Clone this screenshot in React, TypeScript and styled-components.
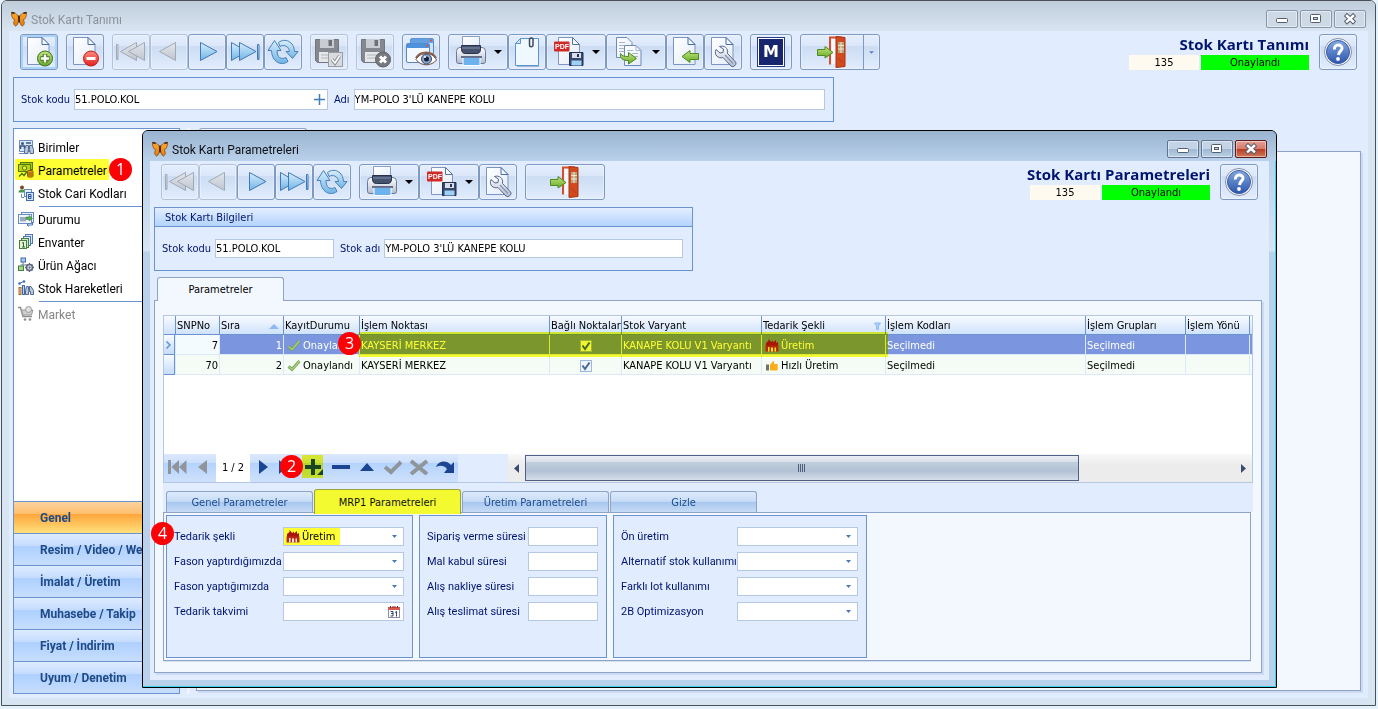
import React from "react";
import styled, { createGlobalStyle, css } from "styled-components";

const ui = `"DejaVu Sans Condensed", "Noto Sans", sans-serif`;
const shell = `"Open Sans", "Noto Sans", sans-serif`;
const menu = `Roboto, "Noto Sans", sans-serif`;
const line = "#6a93cf";
const tabLine = "#8fa3c9";
const fieldLine = "#b4c8e4";
const face = "#e1edff";
const page = "#f3f8ff";
const navy = "#00146e";
const mark = "#ffff33";

const GlobalStyle = createGlobalStyle`
  * { box-sizing: border-box; }
  body { margin: 0; background: #e6f2fb; font: 11px/14px ${ui}; color: #000; }
  button, input, select { font: inherit; color: inherit; margin: 0; }
`;

/* ---------- window frame ---------- */

const Desktop = styled.div`
  display: flex;
  flex-direction: column;
  min-height: 100vh;
  min-width: 1280px;
  padding: 0 2px 3px 1px;
`;

const MainWindow = styled.div`
  position: relative;
  flex: 1;
  display: flex;
  flex-direction: column;
  padding: 0 7px 7px;
  background: #d7e5f2;
  border: 1px solid #4b4f57;
  border-radius: 6px 6px 0 0;
`;

const DialogWindow = styled.section`
  position: absolute;
  z-index: 5;
  top: 129px;
  left: 140px;
  right: 98px;
  padding: 0 7px 7px;
  background: linear-gradient(#9ab3cf 0, #b9d1ea 30px, #d6e4f3 120px, #b9d1ea 121px);
  border: 1px solid #000;
  border-radius: 6px 6px 0 0;
  box-shadow: inset -1px -1px 0 #35d3ea;
`;

const TitleBar = styled.header<{ $active?: boolean }>`
  display: flex;
  align-items: center;
  gap: 4px;
  height: 30px;
  margin: 0 -7px;
  padding: 6px 9px 0 9px;
  border-radius: 5px 5px 0 0;
  font: 12px/16px ${menu};
  color: ${(p) => (p.$active ? "#0c1016" : "#8b939c")};
  background: ${(p) =>
    p.$active ? "linear-gradient(#9ab3cf, #b9d1ea)" : "linear-gradient(#bfccda, #d9e5f1)"};
`;

const TitleText = styled.span`
  flex: 1;
  padding-top: 1px;
`;

const Captions = styled.div`
  display: flex;
  gap: 2px;
`;

const CaptionButton = styled.button<{ $tone: "idle" | "active" | "close" }>`
  display: flex;
  align-items: center;
  justify-content: center;
  width: 32px;
  height: 18px;
  padding: 0;
  border-radius: 2px;
  box-shadow: inset 0 0 0 1px rgba(255, 255, 255, 0.45);
  ${(p) =>
    p.$tone === "idle" &&
    css`
      border: 1px solid #8996aa;
      background: #ced9e6;
    `}
  ${(p) =>
    p.$tone === "active" &&
    css`
      border: 1px solid #62738f;
      background: linear-gradient(#c3d4e7 50%, #9fb8d3 51%, #b9cfe6);
    `}
  ${(p) =>
    p.$tone === "close" &&
    css`
      border: 1px solid #5b1a1a;
      background: linear-gradient(#e2a196 0, #d6796a 49%, #b93a22 51%, #cf7a5c);
    `}
`;

const Client = styled.div`
  flex: 1;
  display: flex;
  flex-direction: column;
  padding: 3px 0 0;
  background: ${face};
`;

/* ---------- toolbar ---------- */

const Toolbar = styled.div`
  display: flex;
  align-items: flex-start;
  gap: 8px;
  padding: 0 11px;
`;

const ButtonGroup = styled.div`
  display: flex;
`;

const ToolButton = styled.button<{ $width?: number; $hot?: boolean }>`
  display: flex;
  align-items: center;
  justify-content: center;
  gap: 8px;
  flex: none;
  width: ${(p) => p.$width ?? 38}px;
  height: 36px;
  padding: 0;
  border: 1px solid #7d99c4;
  border-radius: 3px;
  background: linear-gradient(#e4eefd 0, #dbe7f9 32%, #ccdcf2 34%, #e2edfe);
  box-shadow: ${(p) => (p.$hot ? "inset 0 0 0 2px #a9d3f8" : "inset 0 0 0 1px rgba(255,255,255,.35)")};
  &:disabled {
    border-color: #b3c2da;
  }
`;

const Status = styled.div`
  margin-left: auto;
  display: flex;
  flex-direction: column;
  align-items: flex-end;
  gap: 1px;
`;

const StatusTitle = styled.h1`
  margin: 0;
  font: bold 15px/20px ${shell};
  color: ${navy};
  white-space: nowrap;
`;

const StatusRow = styled.div`
  display: flex;
  gap: 2px;
`;

const StatusCell = styled.span<{ $ok?: boolean }>`
  width: ${(p) => (p.$ok ? 108 : 70)}px;
  height: 15px;
  line-height: 16px;
  text-align: center;
  background: ${(p) => (p.$ok ? "#00ff00" : "#fffaf0")};
`;

const HelpSlot = styled.div`
  margin-left: 2px;
`;

/* ---------- fields ---------- */

const FieldBar = styled.div`
  display: flex;
  align-items: center;
  width: 821px;
  height: 45px;
  margin: 7px 0 0 4px;
  padding: 0 8px 0 7px;
  border: 1px solid ${line};
`;

const Label = styled.label`
  color: ${navy};
  white-space: nowrap;
`;

const TextField = styled.input`
  flex: 1;
  min-width: 0;
  height: 21px;
  padding: 0;
  border: 1px solid ${fieldLine};
  background: #fff;
  outline: none;
`;

const FieldBox = styled.div<{ $width?: number }>`
  position: relative;
  display: flex;
  flex: ${(p) => (p.$width ? "none" : "1")};
  width: ${(p) => (p.$width ? p.$width + "px" : "auto")};
`;

const InnerButton = styled.button<{ $size: number }>`
  position: absolute;
  right: 1px;
  top: 1px;
  bottom: 1px;
  display: flex;
  align-items: center;
  justify-content: center;
  width: ${(p) => p.$size}px;
  padding: 0;
  border: 0;
  background: #fff;
`;

const SideLabel = styled(Label)`
  margin: 0 4px 0 6px;
`;

const FirstLabel = styled(Label)`
  width: 53px;
`;

/* ---------- workspace ---------- */

const Workspace = styled.div`
  flex: 1;
  display: flex;
  margin: 6px 7px 4px 4px;
`;

const Sidebar = styled.nav`
  display: flex;
  flex-direction: column;
  width: 167px;
  background: #fff;
  border: 1px solid ${line};
`;

const SideList = styled.div`
  flex: 1;
  padding: 7px 0 0 1px;
`;

const SideRow = styled.div`
  position: relative;
  height: 23px;
`;

const SideItem = styled.button<{ $marked?: boolean }>`
  display: flex;
  align-items: center;
  gap: 4px;
  height: 21px;
  padding: 0 2px 0 3px;
  border: 0;
  background: ${(p) => (p.$marked ? mark : "none")};
  font: 12px/16px ${menu};
  white-space: nowrap;
  &:disabled {
    color: #868686;
  }
  span {
    padding-top: 2px;
  }
  svg {
    mix-blend-mode: multiply;
  }
`;

const SideRule = styled.hr`
  height: 1px;
  margin: 1px 0 1px 24px;
  border: 0;
  background: ${line};
`;

const SideGroup = styled.button<{ $open?: boolean }>`
  display: block;
  width: 100%;
  height: 32px;
  padding: 0 0 0 26px;
  border: 0;
  border-top: 1px solid ${line};
  font: bold 12px/16px ${menu};
  text-align: left;
  white-space: nowrap;
  overflow: hidden;
  color: #1f4a86;
  background: ${(p) =>
    p.$open
      ? "linear-gradient(#fbd3a0 0, #fdbe6c 38%, #fea63c 40%, #ffe07c)"
      : "linear-gradient(#deebff 0, #c6dcfd 38%, #aed0ff 40%, #c7ddfd)"};
`;

const Splitter = styled.div`
  width: 16px;
  display: flex;
  justify-content: center;
  &::before {
    content: "";
    width: 3px;
    background: #f0f6ff;
  }
`;

const Pages = styled.div`
  flex: 1;
  display: flex;
  flex-direction: column;
  padding-bottom: 3px;
`;

const PageTab = styled.div<{ $width: number }>`
  position: relative;
  z-index: 1;
  display: flex;
  align-items: center;
  justify-content: center;
  width: ${(p) => p.$width}px;
  height: 24px;
  margin: 0 0 -1px 3px;
  padding-top: 1px;
  border: 1px solid ${tabLine};
  border-bottom: 0;
  border-radius: 3px 3px 0 0;
  background: ${page};
`;

const PageBody = styled.div`
  flex: 1;
  border: 1px solid ${tabLine};
  background: ${page};
  box-shadow: 2px 2px 0 #cddbf2;
`;

/* ---------- dialog ---------- */

const DialogClient = styled(Client)`
  padding: 3px 7px 7px 4px;
`;

const DialogToolbar = styled(Toolbar)`
  padding: 0 4px 0 7px;
`;

const InfoPanel = styled.div`
  width: 539px;
  margin-top: 7px;
  border: 1px solid ${line};
`;

const InfoHeader = styled.div`
  height: 19px;
  padding: 0 10px;
  line-height: 20px;
  color: ${navy};
  border-bottom: 1px solid ${line};
  background: linear-gradient(#e3eeff, #b4d3fd);
`;

const InfoRow = styled.div`
  display: flex;
  align-items: center;
  height: 43px;
  padding: 0 9px 0 7px;
  input {
    height: 19px;
  }
`;

const DialogTab = styled(PageTab)`
  margin-top: 6px;
`;

const DialogPage = styled(PageBody)`
  flex: none;
  padding: 14px 8px 11px;
`;

const GridFrame = styled.div`
  position: relative;
  border: 1px solid ${fieldLine};
  background: #fff;
`;

const GridScroll = styled.div`
  min-height: 138px;
  overflow: hidden;
`;

const Table = styled.table`
  width: 100%;
  table-layout: fixed;
  border-collapse: separate;
  border-spacing: 0;
`;

const Th = styled.th`
  height: 19px;
  padding: 2px 1px 0;
  overflow: hidden;
  font-weight: normal;
  text-align: left;
  white-space: nowrap;
  border-left: 1px solid ${line};
  border-bottom: 1px solid ${line};
  background: linear-gradient(#f8fbff, #cfe2fc);
  &:first-child {
    border-left: 0;
  }
`;

const HeadFlex = styled.span`
  display: flex;
  align-items: center;
  justify-content: space-between;
  padding-right: 3px;
`;

const Td = styled.td<{ $kind?: "handle" | "plain" | "focus"; $align?: string }>`
  height: 20px;
  padding: 2px 1px 0;
  overflow: hidden;
  white-space: nowrap;
  text-align: ${(p) => p.$align ?? "left"};
  border-left: 1px solid #dce9fb;
  border-bottom: 1px solid #dce9fb;
  background: ${(p) => (p.$kind === "focus" ? "#7b96de" : p.$kind === "plain" ? "#f3fbff" : "#f4fcf5")};
  color: ${(p) => (p.$kind === "focus" ? "#fff" : "#000")};
  ${(p) =>
    p.$kind === "handle" &&
    css`
      border-left: 0;
      border-right: 1px solid ${line};
      border-bottom: 1px solid ${line};
      background: linear-gradient(#f8fbff, #c5dcfb);
      padding: 0 0 0 1px;
    `}
  svg, input {
    display: block;
  }
`;

const CellFlex = styled.span<{ $gap: number }>`
  display: flex;
  align-items: center;
  gap: ${(p) => p.$gap}px;
  padding-left: 2px;
`;

const Tick = styled.input`
  appearance: none;
  width: 12px;
  height: 12px;
  margin: 0 auto;
  border: 1px solid #9db8dc;
  background: #eef4fc
    url("data:image/svg+xml,%3Csvg xmlns='http://www.w3.org/2000/svg' viewBox='0 0 10 10'%3E%3Cpath d='M1.5 4.5 4 8 8.5 1.5' fill='none' stroke='%234a6797' stroke-width='2'/%3E%3C/svg%3E")
    center / 10px 10px no-repeat;
`;

const RowMark = styled.div`
  position: absolute;
  left: 195px;
  top: 16px;
  width: 529px;
  height: 25px;
  background: ${mark};
  mix-blend-mode: multiply;
  pointer-events: none;
`;

const Badge = styled.span<{ $x: number; $y: number }>`
  position: absolute;
  left: ${(p) => p.$x}px;
  top: ${(p) => p.$y}px;
  z-index: 2;
  width: 23px;
  height: 23px;
  border-radius: 50%;
  background: #fb0207;
  color: #fff;
  font: 16px/23px ${shell};
  text-align: center;
`;

const GridFooter = styled.div`
  display: flex;
  height: 28px;
`;

const Navigator = styled.div`
  display: flex;
  width: 344px;
  background: ${face};
`;

const NavButton = styled.button<{ $marked?: boolean }>`
  display: flex;
  align-items: center;
  justify-content: center;
  width: 26px;
  height: 28px;
  padding: 0 0 2px;
  border: 0;
  background: linear-gradient(#dbe8fc 0, #cde0fb 30%, #b3d3fe 33%, #cbdffb 90%);
  position: relative;
  ${(p) =>
    p.$marked &&
    css`
      &::after {
        content: "";
        position: absolute;
        left: 0;
        top: 1px;
        width: 21px;
        height: 23px;
        background: ${mark};
        mix-blend-mode: multiply;
      }
    `}
`;

const PagerText = styled.span`
  width: 34px;
  line-height: 28px;
  text-align: center;
  background: #fff;
`;

const ScrollBar = styled.div`
  flex: 1;
  display: flex;
  align-items: center;
  background: linear-gradient(#f8f8f8, #ececec 40%);
`;

const ScrollArrow = styled.button`
  display: flex;
  align-items: center;
  justify-content: center;
  width: 17px;
  height: 100%;
  padding: 0;
  border: 0;
  background: none;
`;

const ScrollTrack = styled.div`
  flex: 1;
  display: flex;
  height: 26px;
`;

const ScrollThumb = styled.div`
  display: flex;
  align-items: center;
  justify-content: center;
  width: 78%;
  border: 1px solid #4f5f86;
  background: linear-gradient(#eceff4 0, #d9dfe8 24%, #c1cedd 26%, #b2c1d4 62%, #d5dee9);
`;

const TabStrip = styled.div`
  display: flex;
  align-items: flex-end;
  gap: 1px;
  height: 29px;
  padding-left: 3px;
  background: ${face};
`;

const Tab = styled.button<{ $active?: boolean }>`
  position: relative;
  width: 147px;
  height: ${(p) => (p.$active ? 25 : 21)}px;
  margin-bottom: ${(p) => (p.$active ? -2 : 0)}px;
  z-index: ${(p) => (p.$active ? 1 : 0)};
  padding: 2px 0 0;
  border: 1px solid ${(p) => (p.$active ? "#98a43a" : tabLine)};
  border-bottom: 0;
  border-radius: 3px 3px 0 0;
  color: ${(p) => (p.$active ? "#101010" : "#1d4b8f")};
  background: ${(p) =>
    p.$active ? "#f4fa30" : "linear-gradient(#dceafc 0, #c7dcf6 47%, #a6c6ee 50%, #c6dbf6)"};
`;

const TabPage = styled.div`
  position: relative;
  display: flex;
  gap: 6px;
  margin-right: 2px;
  padding: 2px;
  border: 1px solid ${tabLine};
  background: ${page};
  box-shadow: 0 1px 0 #d5e1f4;
`;

const FieldGroup = styled.fieldset<{ $width: number }>`
  display: flex;
  flex-direction: column;
  gap: 6px;
  width: ${(p) => p.$width}px;
  min-width: 0;
  margin: 0;
  padding: 11px 8px 36px 7px;
  border: 1px solid ${line};
  background: ${face};
`;

const FieldLine = styled.div`
  display: flex;
  align-items: center;
  justify-content: space-between;
  input, select {
    height: 19px;
  }
  label {
    font: 11px/14px ${menu};
  }
`;

const Select = styled.select<{ $marked?: boolean }>`
  appearance: none;
  width: 100%;
  padding: 0 16px 0 ${(p) => (p.$marked ? 18 : 1)}px;
  border: 1px solid ${fieldLine};
  border-radius: 0;
  outline: none;
  background: ${(p) => (p.$marked ? `linear-gradient(${mark}, ${mark}) 0 0 / 56px 100% no-repeat #fff` : "#fff")};
`;

const Caret = styled.svg`
  position: absolute;
  right: 7px;
  top: 8px;
  pointer-events: none;
`;

const FieldIcon = styled.span`
  position: absolute;
  left: 3px;
  top: 3px;
  display: flex;
  pointer-events: none;
`;

/* ---------- icons ---------- */

const HiddenSvg = styled.svg`
  position: absolute;
`;

const Defs = () => (
  <HiddenSvg width="0" height="0" aria-hidden="true">
    <defs>
      <linearGradient id="paper" x1="0" y1="0" x2="1" y2="1">
        <stop offset="0" stopColor="#fff" />
        <stop offset="1" stopColor="#e3ecfa" />
      </linearGradient>
      <linearGradient id="blue" x1="0" y1="0" x2="0" y2="1">
        <stop offset="0" stopColor="#d8eefb" />
        <stop offset="1" stopColor="#6fb4e6" />
      </linearGradient>
      <linearGradient id="grey" x1="0" y1="0" x2="0" y2="1">
        <stop offset="0" stopColor="#e2e7ee" />
        <stop offset="1" stopColor="#bfc5cf" />
      </linearGradient>
      <linearGradient id="green" x1="0" y1="0" x2="0" y2="1">
        <stop offset="0" stopColor="#c3e67b" />
        <stop offset="1" stopColor="#67a92a" />
      </linearGradient>
      <linearGradient id="red" x1="0" y1="0" x2="0" y2="1">
        <stop offset="0" stopColor="#ff8a7c" />
        <stop offset="1" stopColor="#e22020" />
      </linearGradient>
      <linearGradient id="help" x1="0" y1="0" x2="0" y2="1">
        <stop offset="0" stopColor="#84a9df" />
        <stop offset="1" stopColor="#2c55ad" />
      </linearGradient>
      <linearGradient id="metal" x1="0" y1="0" x2="0" y2="1">
        <stop offset="0" stopColor="#fff" />
        <stop offset="1" stopColor="#b3bdd0" />
      </linearGradient>
      <linearGradient id="wing" x1="0" y1="0" x2="0" y2="1">
        <stop offset="0" stopColor="#ffab2e" />
        <stop offset="1" stopColor="#e87a08" />
      </linearGradient>
    </defs>
  </HiddenSvg>
);

const Svg = ({ size = 32, children }: { size?: number; children: React.ReactNode }) => (
  <svg width={size} height={size} viewBox={`0 0 ${size} ${size}`} aria-hidden="true">
    {children}
  </svg>
);

const Paper = () => (
  <>
    <path d="M4.500 1.500H19l7 7V28.500H4.500Z" fill="url(#paper)" stroke="#7d93c0" />
    <path d="M19 1.500V8.500H26Z" fill="#f4f9ff" stroke="#4b6aa8" strokeLinejoin="round" />
  </>
);

const NewIcon = () => (
  <Svg>
    <Paper />
    <circle cx="22" cy="22.500" r="7.500" fill="url(#green)" stroke="#3c6f1e" />
    <path d="M22 18v9M17.500 22.500h9" stroke="#3c6f1e" strokeWidth="4.500" />
    <path d="M22 18.500v8M18 22.500h8" stroke="#fff" strokeWidth="2.500" />
  </Svg>
);
const DeleteIcon = () => (
  <Svg>
    <Paper />
    <circle cx="22" cy="22.500" r="7.500" fill="url(#red)" stroke="#c01c1c" />
    <path d="M17.500 22.500h9" stroke="#fff" strokeWidth="3" />
  </Svg>
);
const FirstIcon = () => (
  <Svg>
    <g fill="url(#grey)" stroke="#a3a9b3" strokeLinejoin="round">
      <rect x="1.500" y="8.500" width="1.500" height="15" />
      <path d="M21.500 6.500V24.500L5.500 15.500Z" />
      <path d="M29.500 6.500V24.500L13.500 15.500Z" />
    </g>
  </Svg>
);
const PrevIcon = () => (
  <Svg>
    <path d="M22.500 6.500V24.500L6.500 15.500Z" fill="url(#grey)" stroke="#a3a9b3" strokeLinejoin="round" />
  </Svg>
);
const NextIcon = () => (
  <Svg>
    <path d="M9.500 6.500V24.500L26 15.500Z" fill="url(#blue)" stroke="#4378b8" strokeLinejoin="round" />
  </Svg>
);
const LastIcon = () => (
  <Svg>
    <g fill="url(#blue)" stroke="#4378b8" strokeLinejoin="round">
      <path d="M2.500 6.500V24.500L18 15.500Z" />
      <path d="M10.500 6.500V24.500L27 15.500Z" />
      <rect x="28.500" y="8.500" width="1.500" height="15" />
    </g>
  </Svg>
);
const RefreshIcon = () => (
  <Svg>
    <g fill="url(#blue)" stroke="#4a80b8" strokeLinejoin="round">
      <path d="M11.500 6.500C18 1.500 27 5.500 27.500 15.500H31L25.500 22.500L19 15.500H22.500C22 10.500 17 8 13 10.500Z" />
      <path d="M21 25.500C14 30.500 5 26 4.500 14.500H1L7.500 4.500L14 14.500H10C10 21.500 14 24 19 21.500Z" />
    </g>
  </Svg>
);
const GreyFloppy = () => (
  <>
    <path d="M2.500 3.500H25.500V26.500H4.500L2.500 24.500Z" fill="#85898f" stroke="#74787e" />
    <rect x="7" y="3" width="14" height="9" fill="#c9ccd1" />
    <rect x="15.500" y="4" width="3.500" height="6" fill="#6d7177" />
    <rect x="6" y="16" width="16" height="10" fill="#e5e7ea" />
    <path d="M8 19h12M8 22h12" stroke="#b1b5bb" />
  </>
);
const SaveIcon = () => (
  <Svg>
    <GreyFloppy />
    <rect x="15.500" y="16.500" width="14" height="14" fill="#d8dade" stroke="#999ea5" />
    <path d="M19 23.500l3 3.500 4.500-7" fill="none" stroke="#8d9299" strokeWidth="3.500" />
    <path d="M19 23.500l3 3.500 4.500-7" fill="none" stroke="#fff" strokeWidth="1.500" />
  </Svg>
);
const CancelIcon = () => (
  <Svg>
    <GreyFloppy />
    <circle cx="24" cy="23.500" r="7.500" fill="#76797e" stroke="#5e6166" />
    <path d="M21 20.500l6 6M27 20.500l-6 6" stroke="#fff" strokeWidth="3" />
  </Svg>
);
const PreviewIcon = () => (
  <Svg>
    <rect x="5.500" y="2.500" width="23" height="16" rx="1.500" fill="#cfe4fa" stroke="#5a86c0" />
    <rect x="5.500" y="2.500" width="23" height="4.500" rx="1.500" fill="#62a0e2" />
    <rect x="1.500" y="7.500" width="23" height="19" rx="1.500" fill="#f4f8ff" stroke="#5a86c0" />
    <rect x="1.500" y="7.500" width="23" height="4.500" rx="1.500" fill="#4f92dc" />
    <circle cx="26" cy="4.500" r="1" fill="#e84b2c" />
    <circle cx="22" cy="9.700" r="1" fill="#e84b2c" />
    <path d="M11 23.500C15 16 27 15 31.500 24C27 30 16 31 11 23.500Z" fill="#fff" stroke="#6b4c3f" />
    <path d="M11 22C15 14.500 27 14.500 31 22" fill="none" stroke="#8a5f4c" strokeWidth="2" />
    <circle cx="21.500" cy="23" r="5" fill="#8aa4c8" stroke="#34476a" />
    <circle cx="21.500" cy="23" r="2.500" fill="#14203c" />
    <circle cx="20" cy="21" r="1" fill="#fff" />
  </Svg>
);
const PrintIcon = () => (
  <Svg>
    <path d="M8.500.500H25.500V14H8.500Z" fill="url(#paper)" stroke="#8a9dc0" />
    <path d="M2.500 15.500Q2.500 11.500 6 11.500H28Q31.500 11.500 31.500 15.500V25.500Q31.500 27.500 29 27.500H5Q2.500 27.500 2.500 25.500Z" fill="url(#metal)" stroke="#68789c" />
    <path d="M7.500 9.500H26.500V13Q26.500 17.500 22.500 17.500H11.500Q7.500 17.500 7.500 13Z" fill="#46536f" stroke="#26314b" />
    <path d="M8 12H26" stroke="#8190ae" />
    <rect x="9" y="21.500" width="17" height="8" fill="#6cb2ee" stroke="#fff" />
    <path d="M7 21H28" stroke="#3b4968" strokeWidth="1.500" />
  </Svg>
);
const AttachIcon = () => (
  <Svg>
    <path d="M9.500 2.500H27.500V29.500H4.500V7.500Z" fill="#f0f8ff" stroke="#5b94d2" />
    <path d="M9.500 2.500V7.500H4.500Z" fill="#cfe5fa" stroke="#5b94d2" />
    <path d="M6 30.500H28" stroke="#9fb6d4" />
    <path d="M18.500 3v6a1.500 1.500 0 0 0 3.500 0V3a2 2 0 0 0-3.500 0M22 2.500v6" fill="none" stroke="#414b60" strokeWidth="1.500" />
  </Svg>
);
const PdfIcon = () => (
  <Svg>
    <path d="M6.500 1.500H20.500l7 7V28.500H6.500Z" fill="url(#paper)" stroke="#8195bf" />
    <path d="M20.500 1.500V8.500H27.500Z" fill="#f4f9ff" stroke="#5672a8" />
    <rect x="2" y="5.500" width="15.500" height="10" rx="1" fill="#cf2a27" />
    <text x="3" y="13" fontFamily="Liberation Sans" fontWeight="bold" fontSize="7" fill="#fff">PDF</text>
    <path d="M17.500 16.500H31V29.500H17.500Z" fill="#38496e" stroke="#222f50" />
    <rect x="20" y="17" width="9" height="5" fill="#d9dee8" />
    <rect x="25" y="18" width="2" height="3" fill="#25345a" />
    <rect x="19.500" y="24.500" width="10" height="5" fill="#9fd0f5" />
  </Svg>
);
const CopyIcon = () => (
  <Svg>
    <path d="M4.500 1.500H15l5 5V21.500H4.500Z" fill="url(#paper)" stroke="#7089b8" />
    <path d="M7 6.500h6M7 9.500h7M7 12.500h6M7 15.500h5" stroke="#a7b6d0" />
    <path d="M12.500 9.500H24l5 5V29.500H12.500Z" fill="url(#paper)" stroke="#7089b8" />
    <path d="M24 9.500v5h5M15 14.500h6M20 17.500h6M22 20.500h4" fill="none" stroke="#a7b6d0" />
    <path d="M8.500 17.500C9.500 20 12.500 20.500 16.500 20.500V16.500L24.500 22.500L16.500 28V24.500C10.500 25 7.500 21.500 8.500 17.500Z" fill="url(#green)" stroke="#4d8a1f" />
  </Svg>
);
const ImportIcon = () => (
  <Svg>
    <Paper />
    <path d="M29.500 17.500H21V14.500L13 20.500L21 26.500V23.500H29.500Z" fill="url(#green)" stroke="#4d8a1f" strokeLinejoin="round" />
  </Svg>
);
const ToolsIcon = () => (
  <Svg>
    <Paper />
    <path d="M9 13.500l4 3.500 3-.5.500-3.500-4-2.500C17 9 21.500 12 20.500 17.500l8 8.500c2 2.500-2.500 6-4.500 4L16 21.500C11.500 23 6.500 19 9 13.500Z" fill="url(#metal)" stroke="#55648a" strokeLinejoin="round" />
    <path d="M18 19l8 8.500" stroke="#8b98b4" strokeWidth="1.500" />
  </Svg>
);
const ExitIcon = () => (
  <Svg>
    <path d="M14 28.500V1.500H26" fill="none" stroke="#d4502a" strokeWidth="2" />
    <path d="M15.500 3H20V28H15.500Z" fill="#f4f7fd" />
    <path d="M20 .500L29 1.500V30.500L20 31.500Z" fill="#d2481f" stroke="#a9340f" />
    <path d="M22 6h6v11h-6Z" fill="#b7a27e" />
    <path d="M22 9.500h6M22 13h6M25 6v11" stroke="#f2e6c8" />
    <path d="M22 22l5 5" stroke="#b83a14" />
    <path d="M1.500 13.500H9V10.500L17 16.500L9 22V19.500H1.500Z" fill="url(#green)" stroke="#4d8a1f" strokeLinejoin="round" />
  </Svg>
);
const HelpIcon = () => (
  <Svg>
    <circle cx="16" cy="16" r="13.500" fill="#f4f6fb" stroke="#8490aa" />
    <circle cx="16" cy="16" r="11.500" fill="url(#help)" stroke="#3b5ea6" />
    <path d="M12.500 13.500C11.500 7.500 20.500 8 20 12.500C19.500 15 17 15 16.500 19" fill="none" stroke="#fff" strokeWidth="3" />
    <circle cx="16" cy="23" r="1.900" fill="#fff" />
  </Svg>
);

const Monogram = styled.span`
  display: flex;
  align-items: center;
  justify-content: center;
  width: 28px;
  height: 30px;
  border: 1px solid #2a3a86;
  background: #fff;
  span {
    width: 24px;
    height: 26px;
    font: bold 16px/26px "DejaVu Sans", sans-serif;
    color: #fff;
    background: #17246e;
  }
`;

const SplitPart = styled.span`
  display: flex;
  align-items: center;
  justify-content: center;
  width: 62px;
  height: 34px;
`;

const SplitArrow = styled(SplitPart)`
  width: 16px;
  border-left: 1px solid #7d99c4;
`;

const Down = ({ color = "#000", big }: { color?: string; big?: boolean }) => (
  <svg width={big ? 8 : 5} height={big ? 4 : 3} viewBox="0 0 8 4" aria-hidden="true">
    <path d="M0 0H8L4 4Z" fill={color} />
  </svg>
);

const Butterfly = () => (
  <Svg size={16}>
    <path d="M7.500 6C6 2.500 3 1 .500 1.500C.500 5 1.500 8.500 4 9C2 10.500 2.500 14 4.500 15C6.500 14.500 7 12 7.500 9.500Z" fill="url(#wing)" stroke="#8a4a10" strokeWidth=".800" />
    <path d="M8.500 6C10 2.500 13 1 15.500 1.500C15.500 5 14.500 8.500 12 9C14 10.500 13.500 14 11.500 15C9.500 14.500 9 12 8.500 9.500Z" fill="url(#wing)" stroke="#8a4a10" strokeWidth=".800" />
    <path d="M.500 1.500L3.500 2.500M15.500 1.500L12.500 2.500" stroke="#3a2410" strokeWidth="1.500" />
    <path d="M8 4.500v7" stroke="#2c1a0c" strokeWidth="1.500" />
  </Svg>
);

const MinGlyph = () => (
  <Svg size={12}>
    <rect x=".500" y="5.500" width="11" height="4" rx="1" fill="#fff" stroke="#555e70" />
  </Svg>
);
const MaxGlyph = () => (
  <Svg size={12}>
    <rect x=".500" y="1.500" width="10" height="8" rx="1" fill="#fff" stroke="#555e70" />
    <rect x="3.500" y="4.500" width="4" height="2" fill="#c6d2e2" stroke="#555e70" />
  </Svg>
);
const CloseGlyph = () => (
  <Svg size={12}>
    <path d="M3 3l6 5.500M9 3L3 8.500" stroke="#555e70" strokeWidth="4.500" strokeLinecap="square" />
    <path d="M3 3l6 5.500M9 3L3 8.500" stroke="#fff" strokeWidth="2.500" strokeLinecap="square" />
  </Svg>
);

const UnitsIcon = () => (
  <Svg size={16}>
    <path d="M1.500 1.500h13v11h-13Z" fill="#dbe8fa" stroke="#6a8cc0" />
    <circle cx="4.500" cy="4.500" r="1.500" fill="#3a5688" />
    <path d="M2.500 10V7h4v3M8 4h5" fill="none" stroke="#3a5688" strokeWidth="1.500" />
    <path d="M6.500 14.500v-4l1.500-4h2.500v4h1v-4H14l1.500 4v4H12v-3h-2v3Z" fill="#b9c8e0" stroke="#54698f" />
    <path d="M1 14.500h5" stroke="#6a8cc0" />
  </Svg>
);
const MoneyIcon = () => (
  <Svg size={16}>
    <rect x="2.500" y=".500" width="12" height="7" fill="#a5c77c" stroke="#55792c" />
    <rect x=".500" y="2.500" width="12" height="7" fill="#b9d492" stroke="#55792c" />
    <circle cx="6.500" cy="6" r="2.200" fill="#e5efd2" stroke="#55792c" />
    <path d="M1 14.500l3-3 2 2 3-4" fill="none" stroke="#4b7c1f" strokeWidth="1.500" />
    <rect x="9.500" y="8.500" width="5.500" height="6.500" rx="1" fill="#e89b2c" stroke="#8c5a10" />
    <path d="M9.500 11h5M9.500 13h5" stroke="#8c5a10" />
  </Svg>
);
const CodesIcon = () => (
  <Svg size={16}>
    <circle cx="4" cy="2.500" r="2" fill="#7a4a28" />
    <path d="M.500 7.500q0-3 3.500-3t3.500 3Z" fill="#4a9a4a" />
    <path d="M3.500 9v3.500H6" fill="none" stroke="#6a8cc0" />
    <rect x="6.500" y="4.500" width="7" height="7" fill="#e8f0fc" stroke="#6a8cc0" />
    <rect x="8.500" y="7.500" width="7" height="8" fill="#d5e5fa" stroke="#3f6cb0" />
    <path d="M10.500 13.500v-4h2.500v4ZM10.500 11.500h2.500" fill="none" stroke="#2a5298" />
  </Svg>
);
const StateIcon = () => (
  <Svg size={16}>
    <rect x="3.500" y="1.500" width="12" height="10" fill="#e8f0fc" stroke="#6a8cc0" />
    <rect x=".500" y="3.500" width="13" height="9" fill="#f2f7ff" stroke="#6a8cc0" />
    <path d="M3 6v4.500M5 6v4.500M7 6v4.500" stroke="#4b5f88" />
    <path d="M8 6h3V4.500l3.500 3L11 10V8.500H8Z" fill="#58b04a" stroke="#2f7a2a" strokeWidth=".500" />
    <path d="M14.500 11v3h-5M11 12l-2 2 2 1.500" fill="none" stroke="#3f78c8" />
  </Svg>
);
const InventoryIcon = () => (
  <Svg size={16}>
    <rect x="7.500" y=".500" width="7" height="9" fill="#d7e6fa" stroke="#4f78b4" />
    <rect x="5.500" y="2.500" width="7" height="9" fill="#d7e6fa" stroke="#4f78b4" />
    <rect x="3.500" y="4.500" width="7" height="9" fill="#cfe6c4" stroke="#46803c" />
    <rect x="1.500" y="6.500" width="7" height="8" fill="#e4f4da" stroke="#46803c" />
    <path d="M4 9l1.500-.5V13M4 13h3" fill="none" stroke="#2f6a28" />
  </Svg>
);
const TreeIcon = () => (
  <Svg size={16}>
    <rect x="3" y="1" width="4.500" height="4" fill="#a9caf2" stroke="#3f6cb0" />
    <path d="M5 5v3M2.500 8h6" fill="none" stroke="#6a7a90" />
    <rect x=".500" y="9" width="5" height="4.500" fill="#a5d88a" stroke="#46803c" />
    <circle cx="11.500" cy="10.500" r="3" fill="#d5dae2" stroke="#5d6880" strokeWidth="1.500" />
    <circle cx="11.500" cy="10.500" r="1" fill="#5d6880" />
    <path d="M11.500 6v1.500M11.500 13.500V15M7 10.500h1.500M14.500 10.500H16M8.500 7.500l1 1M14.500 7.500l-1 1M8.500 13.500l1-1M14.500 13.500l-1-1" stroke="#5d6880" strokeWidth="1.300" />
  </Svg>
);
const MovesIcon = () => (
  <Svg size={16}>
    <path d="M1.500 3.500L5.500 1.500" stroke="#3f6cb0" />
    <circle cx="1.500" cy="3.500" r="1.300" fill="#3f6cb0" />
    <circle cx="6" cy="1.500" r="1.300" fill="#3f6cb0" />
    <rect x="1" y="7.500" width="2" height="7" fill="#f0c9a0" stroke="#a9682c" />
    <rect x="4.500" y="5.500" width="2" height="9" fill="#bcd2f0" stroke="#3f6cb0" />
    <path d="M7.500 14.500v-4l1-4H10.500v4h1v-4H13l2.500 4v4H12.500v-3h-2v3Z" fill="#b9c8e0" stroke="#54698f" />
  </Svg>
);
const CartIcon = () => (
  <Svg size={16}>
    <path d="M0 1.500h2.500l2.500 9h9" fill="none" stroke="#8d8d8d" strokeWidth="1.500" />
    <path d="M3.500 4H15l-1.500 5H5Z" fill="#cfcfcf" stroke="#9a9a9a" />
    <circle cx="10.500" cy="3.500" r="3" fill="#e1e1e1" stroke="#9a9a9a" />
    <circle cx="7" cy="13.500" r="1.300" fill="#8d8d8d" />
    <circle cx="12" cy="13.500" r="1.300" fill="#8d8d8d" />
  </Svg>
);
const FactoryIcon = () => (
  <Svg size={14}>
    <path d="M1 7V4L3.500 2V0L5 1.500L6 3L8 1.500V3.500L11 1V4L13 3V7Z" fill="#a8150f" />
    <path d="M.500 6.500h13v6h-13Z" fill="#b82a1e" />
    <path d="M3 8v4.500H4.500V8ZM6 8.500v4H8V8.500ZM9.500 8.500v4H11V8.500Z" fill="#fbe7c8" />
  </Svg>
);
const ThumbIcon = () => (
  <Svg size={14}>
    <rect x="1" y="5.500" width="3" height="6" fill="#75706a" />
    <path d="M5 6l3-4q1.500 0 1 3h3.500q.500 1 0 6.500H6L5 10.500Z" fill="#fbae17" />
  </Svg>
);
const CheckIcon = () => (
  <Svg size={14}>
    <path d="M1.500 7.500l3.500 3L12.500 2" fill="none" stroke="#7c9a62" strokeWidth="3" />
    <path d="M1.500 7.500l3.500 3L12.500 2" fill="none" stroke="#a3d275" strokeWidth="1.500" />
  </Svg>
);
const CalendarIcon = () => (
  <Svg size={12}>
    <rect x=".500" y="2.500" width="11" height="9" fill="#fff" stroke="#8b8fa0" />
    <rect x="0" y="1" width="12" height="3" fill="#d8574e" />
    <path d="M2.500 0v2M5 0v2M7 0v2M9.500 0v2" stroke="#7a2a2a" />
    <path d="M2.500 5.500h2.500v4.500h-2.500M3 7.500h2M7 6.500L8.500 5.500v5" fill="none" stroke="#33405e" />
  </Svg>
);

const navBlue = "#1b4592";
const navGrey = "#90959c";

const Glyph = ({ d, color = navBlue, stroke }: { d: string; color?: string; stroke?: number }) => (
  <svg width="20" height="16" viewBox="0 0 20 16" aria-hidden="true">
    <path d={d} fill={stroke ? "none" : color} stroke={stroke ? color : "none"} strokeWidth={stroke} />
  </svg>
);

/* ---------- parts ---------- */

type ToolProps = { label: string; width?: number; disabled?: boolean; hot?: boolean; children: React.ReactNode };

const Tool = ({ label, width, disabled, hot, children }: ToolProps) => (
  <ToolButton type="button" aria-label={label} title={label} $width={width} $hot={hot} disabled={disabled}>
    {children}
  </ToolButton>
);

const DropTool = ({ label, children }: { label: string; children: React.ReactNode }) => (
  <Tool label={label} width={60}>
    {children}
    <Down big />
  </Tool>
);

const MoveTools = () => (
  <ButtonGroup>
    <Tool label="İlk kayıt" disabled><FirstIcon /></Tool>
    <Tool label="Önceki kayıt" disabled><PrevIcon /></Tool>
    <Tool label="Sonraki kayıt"><NextIcon /></Tool>
    <Tool label="Son kayıt"><LastIcon /></Tool>
    <Tool label="Yenile"><RefreshIcon /></Tool>
  </ButtonGroup>
);

const StatusBlock = ({ title }: { title: string }) => (
  <>
    <Status>
      <StatusTitle>{title}</StatusTitle>
      <StatusRow>
        <StatusCell>135</StatusCell>
        <StatusCell $ok>Onaylandı</StatusCell>
      </StatusRow>
    </Status>
    <HelpSlot>
      <Tool label="Yardım"><HelpIcon /></Tool>
    </HelpSlot>
  </>
);

const CaptionButtons = ({ active }: { active?: boolean }) => {
  const tone = active ? "active" : "idle";
  return (
    <Captions>
      <CaptionButton type="button" aria-label="Küçült" $tone={tone}><MinGlyph /></CaptionButton>
      <CaptionButton type="button" aria-label="Ekranı kapla" $tone={tone}><MaxGlyph /></CaptionButton>
      <CaptionButton type="button" aria-label="Kapat" $tone={active ? "close" : "idle"}><CloseGlyph /></CaptionButton>
    </Captions>
  );
};

type Entry = { name: string; icon: React.ReactNode; marked?: boolean; disabled?: boolean; badge?: string };

const sideBlocks: Entry[][] = [
  [
    { name: "Birimler", icon: <UnitsIcon /> },
    { name: "Parametreler", icon: <MoneyIcon />, marked: true, badge: "1" },
    { name: "Stok Cari Kodları", icon: <CodesIcon /> },
  ],
  [
    { name: "Durumu", icon: <StateIcon /> },
    { name: "Envanter", icon: <InventoryIcon /> },
    { name: "Ürün Ağacı", icon: <TreeIcon /> },
    { name: "Stok Hareketleri", icon: <MovesIcon /> },
  ],
  [{ name: "Market", icon: <CartIcon />, disabled: true }],
];

const sideGroups = [
  "Genel",
  "Resim / Video / Web",
  "İmalat / Üretim",
  "Muhasebe / Takip",
  "Fiyat / İndirim",
  "Uyum / Denetim",
];

const SelectField = ({ id, label, value = "", icon }: { id: string; label: string; value?: string; icon?: React.ReactNode }) => (
  <FieldLine>
    <Label htmlFor={id}>{label}</Label>
    <FieldBox $width={121}>
      <Select id={id} defaultValue={value} $marked={!!icon}>
        <option value={value}>{value}</option>
      </Select>
      {icon && <FieldIcon>{icon}</FieldIcon>}
      <Caret width="5" height="3" viewBox="0 0 5 3"><path d="M0 0H5L2.500 3Z" fill="#4a78b8" /></Caret>
    </FieldBox>
  </FieldLine>
);

const NumberField = ({ id, label }: { id: string; label: string }) => (
  <FieldLine>
    <Label htmlFor={id}>{label}</Label>
    <FieldBox $width={70}><TextField id={id} type="text" /></FieldBox>
  </FieldLine>
);

type Row = { no: string; order: string; focus?: boolean; mode: string; icon: React.ReactNode };

const rows: Row[] = [
  { no: "7", order: "1", focus: true, mode: "Üretim", icon: <FactoryIcon /> },
  { no: "70", order: "2", mode: "Hızlı Üretim", icon: <ThumbIcon /> },
];

const widths = [11, 44, 64, 76, 190, 72, 140, 124, 200, 100, 64];

const ParameterGrid = () => (
  <GridFrame>
    <GridScroll>
      <Table>
        <colgroup>
          {widths.map((w, i) => <col key={i} width={w} />)}
          <col />
        </colgroup>
        <thead>
          <tr>
            <Th />
            <Th>SNPNo</Th>
            <Th>
              <HeadFlex>
                Sıra
                <svg width="10" height="5" viewBox="0 0 10 5" aria-hidden="true"><path d="M0 5L5 0L10 5Z" fill="#8ab8f2" /></svg>
              </HeadFlex>
            </Th>
            <Th>KayıtDurumu</Th>
            <Th>İşlem Noktası</Th>
            <Th>Bağlı Noktalar</Th>
            <Th>Stok Varyant</Th>
            <Th>
              <HeadFlex>
                Tedarik Şekli
                <svg width="7" height="8" viewBox="0 0 7 8" aria-hidden="true"><path d="M.500 1H6.500L4.500 4V7.500H2.500V4Z" fill="#a9cdfb" stroke="#8fbdf5" /></svg>
              </HeadFlex>
            </Th>
            <Th>İşlem Kodları</Th>
            <Th>İşlem Grupları</Th>
            <Th>İşlem Yönü</Th>
            <Th />
          </tr>
        </thead>
        <tbody>
          {rows.map((r) => {
            const kind = r.focus ? "focus" : undefined;
            return (
              <tr key={r.no}>
                <Td $kind="handle">
                  {r.focus && (
                    <svg width="7" height="8" viewBox="0 0 7 8" aria-hidden="true"><path d="M1.500 .500L5 4L1.500 7.500" fill="none" stroke="#5a94dc" strokeWidth="1.500" /></svg>
                  )}
                </Td>
                <Td $kind={r.focus ? "plain" : undefined} $align="right">{r.no}</Td>
                <Td $kind={kind} $align="right">{r.order}</Td>
                <Td $kind={kind}><CellFlex $gap={2}><CheckIcon />Onaylandı</CellFlex></Td>
                <Td $kind={kind}>KAYSERİ MERKEZ</Td>
                <Td $kind={kind} $align="center"><Tick type="checkbox" defaultChecked aria-label="Bağlı Noktalar" /></Td>
                <Td $kind={kind}>KANAPE KOLU V1 Varyantı</Td>
                <Td $kind={kind}><CellFlex $gap={2}>{r.icon}{r.mode}</CellFlex></Td>
                <Td $kind={kind}>Seçilmedi</Td>
                <Td $kind={kind}>Seçilmedi</Td>
                <Td $kind={kind} />
                <Td $kind={kind} />
              </tr>
            );
          })}
        </tbody>
      </Table>
    </GridScroll>
    <RowMark />
    <Badge $x={174} $y={16}>3</Badge>
    <GridFooter>
      <Navigator>
        <NavButton type="button" aria-label="İlk"><Glyph color={navGrey} d="M1 1H4V15H1ZM12 1V15L4.500 8ZM19.500 1V15L12 8Z" /></NavButton>
        <NavButton type="button" aria-label="Önceki"><Glyph color={navGrey} d="M14 1V15L5 8Z" /></NavButton>
        <PagerText>1 / 2</PagerText>
        <NavButton type="button" aria-label="Sonraki"><Glyph d="M6 1V15L15 8Z" /></NavButton>
        <NavButton type="button" aria-label="Son"><Glyph d="M0 1V15L7.500 8ZM8 1V15L15.500 8ZM16 1H19V15H16Z" /></NavButton>
        <NavButton type="button" aria-label="Ekle" $marked><Glyph d="M6 0H10V6H16V10H10V16H6V10H0V6H6ZM18 10V16H12Z" /></NavButton>
        <NavButton type="button" aria-label="Sil"><Glyph d="M1 6H19V10H1Z" /></NavButton>
        <NavButton type="button" aria-label="Düzenle"><Glyph d="M3 12L10 4L17 12Z" /></NavButton>
        <NavButton type="button" aria-label="Onayla"><Glyph color={navGrey} stroke={4} d="M2 8L8 13L18 3" /></NavButton>
        <NavButton type="button" aria-label="Vazgeç"><Glyph color={navGrey} stroke={4} d="M2 2L18 15M18 2L2 15" /></NavButton>
        <NavButton type="button" aria-label="Yenile"><Glyph d="M1 8C3 2 11 0 16 6L19 3V14H9L12 10C9 6 5 6 1 8Z" /></NavButton>
      </Navigator>
      <ScrollBar>
        <ScrollArrow type="button" aria-label="Sola kaydır">
          <svg width="5" height="9" viewBox="0 0 5 9"><path d="M5 0V9L0 4.500Z" fill="#3d4c72" /></svg>
        </ScrollArrow>
        <ScrollTrack>
          <ScrollThumb>
            <svg width="8" height="8" viewBox="0 0 8 8"><path d="M.500 0V8M2.500 0V8M4.500 0V8M6.500 0V8" stroke="#505d7c" /></svg>
          </ScrollThumb>
        </ScrollTrack>
        <ScrollArrow type="button" aria-label="Sağa kaydır">
          <svg width="5" height="9" viewBox="0 0 5 9"><path d="M0 0V9L5 4.500Z" fill="#3d4c72" /></svg>
        </ScrollArrow>
      </ScrollBar>
    </GridFooter>
    <Badge $x={116} $y={139}>2</Badge>
  </GridFrame>
);

const ParameterDialog = () => (
  <DialogWindow aria-label="Stok Kartı Parametreleri">
    <TitleBar $active>
      <Butterfly />
      <TitleText>Stok Kartı Parametreleri</TitleText>
      <CaptionButtons active />
    </TitleBar>
    <DialogClient>
      <DialogToolbar>
        <MoveTools />
        <ButtonGroup>
          <DropTool label="Yazdır"><PrintIcon /></DropTool>
          <DropTool label="PDF kaydet"><PdfIcon /></DropTool>
          <Tool label="Araçlar"><ToolsIcon /></Tool>
        </ButtonGroup>
        <Tool label="Çıkış" width={80}><ExitIcon /></Tool>
        <StatusBlock title="Stok Kartı Parametreleri" />
      </DialogToolbar>
      <InfoPanel>
        <InfoHeader>Stok Kartı Bilgileri</InfoHeader>
        <InfoRow>
          <FirstLabel htmlFor="d-code">Stok kodu</FirstLabel>
          <FieldBox $width={119}><TextField id="d-code" defaultValue="51.POLO.KOL" /></FieldBox>
          <SideLabel htmlFor="d-name">Stok adı</SideLabel>
          <TextField id="d-name" defaultValue="YM-POLO 3'LÜ KANEPE KOLU" />
        </InfoRow>
      </InfoPanel>
      <DialogTab $width={127}>Parametreler</DialogTab>
      <DialogPage>
        <ParameterGrid />
        <TabStrip role="tablist">
          <Tab type="button" role="tab">Genel Parametreler</Tab>
          <Tab type="button" role="tab" aria-selected $active>MRP1 Parametreleri</Tab>
          <Tab type="button" role="tab">Üretim Parametreleri</Tab>
          <Tab type="button" role="tab">Gizle</Tab>
        </TabStrip>
        <TabPage>
          <Badge $x={-13} $y={9}>4</Badge>
          <FieldGroup $width={247}>
            <SelectField id="supply" label="Tedarik şekli" value="Üretim" icon={<FactoryIcon />} />
            <SelectField id="sub-out" label="Fason yaptırdığımızda" />
            <SelectField id="sub-in" label="Fason yaptığımızda" />
            <FieldLine>
              <Label htmlFor="calendar">Tedarik takvimi</Label>
              <FieldBox $width={121}>
                <TextField id="calendar" type="text" />
                <InnerButton type="button" aria-label="Takvim" $size={18}><CalendarIcon /></InnerButton>
              </FieldBox>
            </FieldLine>
          </FieldGroup>
          <FieldGroup $width={188}>
            <NumberField id="order-time" label="Sipariş verme süresi" />
            <NumberField id="accept-time" label="Mal kabul süresi" />
            <NumberField id="freight-time" label="Alış nakliye süresi" />
            <NumberField id="delivery-time" label="Alış teslimat süresi" />
          </FieldGroup>
          <FieldGroup $width={254}>
            <SelectField id="pre" label="Ön üretim" />
            <SelectField id="alt" label="Alternatif stok kullanımı" />
            <SelectField id="lot" label="Farklı lot kullanımı" />
            <SelectField id="opt" label="2B Optimizasyon" />
          </FieldGroup>
        </TabPage>
      </DialogPage>
    </DialogClient>
  </DialogWindow>
);

export default function App() {
  return (
    <Desktop>
      <GlobalStyle />
      <Defs />
      <MainWindow>
        <TitleBar>
          <Butterfly />
          <TitleText>Stok Kartı Tanımı</TitleText>
          <CaptionButtons />
        </TitleBar>
        <Client>
          <Toolbar>
            <Tool label="Yeni" hot><NewIcon /></Tool>
            <Tool label="Sil"><DeleteIcon /></Tool>
            <MoveTools />
            <Tool label="Kaydet" disabled><SaveIcon /></Tool>
            <Tool label="Vazgeç" disabled><CancelIcon /></Tool>
            <Tool label="Önizleme"><PreviewIcon /></Tool>
            <ButtonGroup>
              <DropTool label="Yazdır"><PrintIcon /></DropTool>
              <Tool label="Ekler"><AttachIcon /></Tool>
              <DropTool label="PDF kaydet"><PdfIcon /></DropTool>
              <DropTool label="Kopyala"><CopyIcon /></DropTool>
              <Tool label="İçe aktar"><ImportIcon /></Tool>
              <Tool label="Araçlar"><ToolsIcon /></Tool>
            </ButtonGroup>
            <Tool label="M" width={42}><Monogram><span>M</span></Monogram></Tool>
            <Tool label="Çıkış" width={80}>
              <ButtonGroup as="span">
                <SplitPart><ExitIcon /></SplitPart>
                <SplitArrow><Down color="#5d82bd" /></SplitArrow>
              </ButtonGroup>
            </Tool>
            <StatusBlock title="Stok Kartı Tanımı" />
          </Toolbar>
          <FieldBar>
            <FirstLabel htmlFor="code">Stok kodu</FirstLabel>
            <FieldBox $width={254}>
              <TextField id="code" defaultValue="51.POLO.KOL" />
              <InnerButton type="button" aria-label="Stok seç" $size={16}>
                <svg width="11" height="11" viewBox="0 0 11 11"><path d="M5.500 0V11M0 5.500H11" stroke="#3f7cba" strokeWidth="1.500" /></svg>
              </InnerButton>
            </FieldBox>
            <SideLabel htmlFor="name">Adı</SideLabel>
            <TextField id="name" defaultValue="YM-POLO 3'LÜ KANEPE KOLU" />
          </FieldBar>
          <Workspace>
            <Sidebar>
              <SideList>
                {sideBlocks.map((block, i) => (
                  <React.Fragment key={i}>
                    {i > 0 && <SideRule />}
                    {block.map((e) => (
                      <SideRow key={e.name}>
                        <SideItem type="button" $marked={e.marked} disabled={e.disabled}>
                          {e.icon}
                          <span>{e.name}</span>
                        </SideItem>
                        {e.badge && <Badge $x={94} $y={-1}>{e.badge}</Badge>}
                      </SideRow>
                    ))}
                  </React.Fragment>
                ))}
              </SideList>
              {sideGroups.map((g, i) => (
                <SideGroup key={g} type="button" $open={i === 0}>{g}</SideGroup>
              ))}
            </Sidebar>
            <Splitter />
            <Pages>
              <PageTab $width={108} />
              <PageBody />
            </Pages>
          </Workspace>
        </Client>
        <ParameterDialog />
      </MainWindow>
    </Desktop>
  );
}
